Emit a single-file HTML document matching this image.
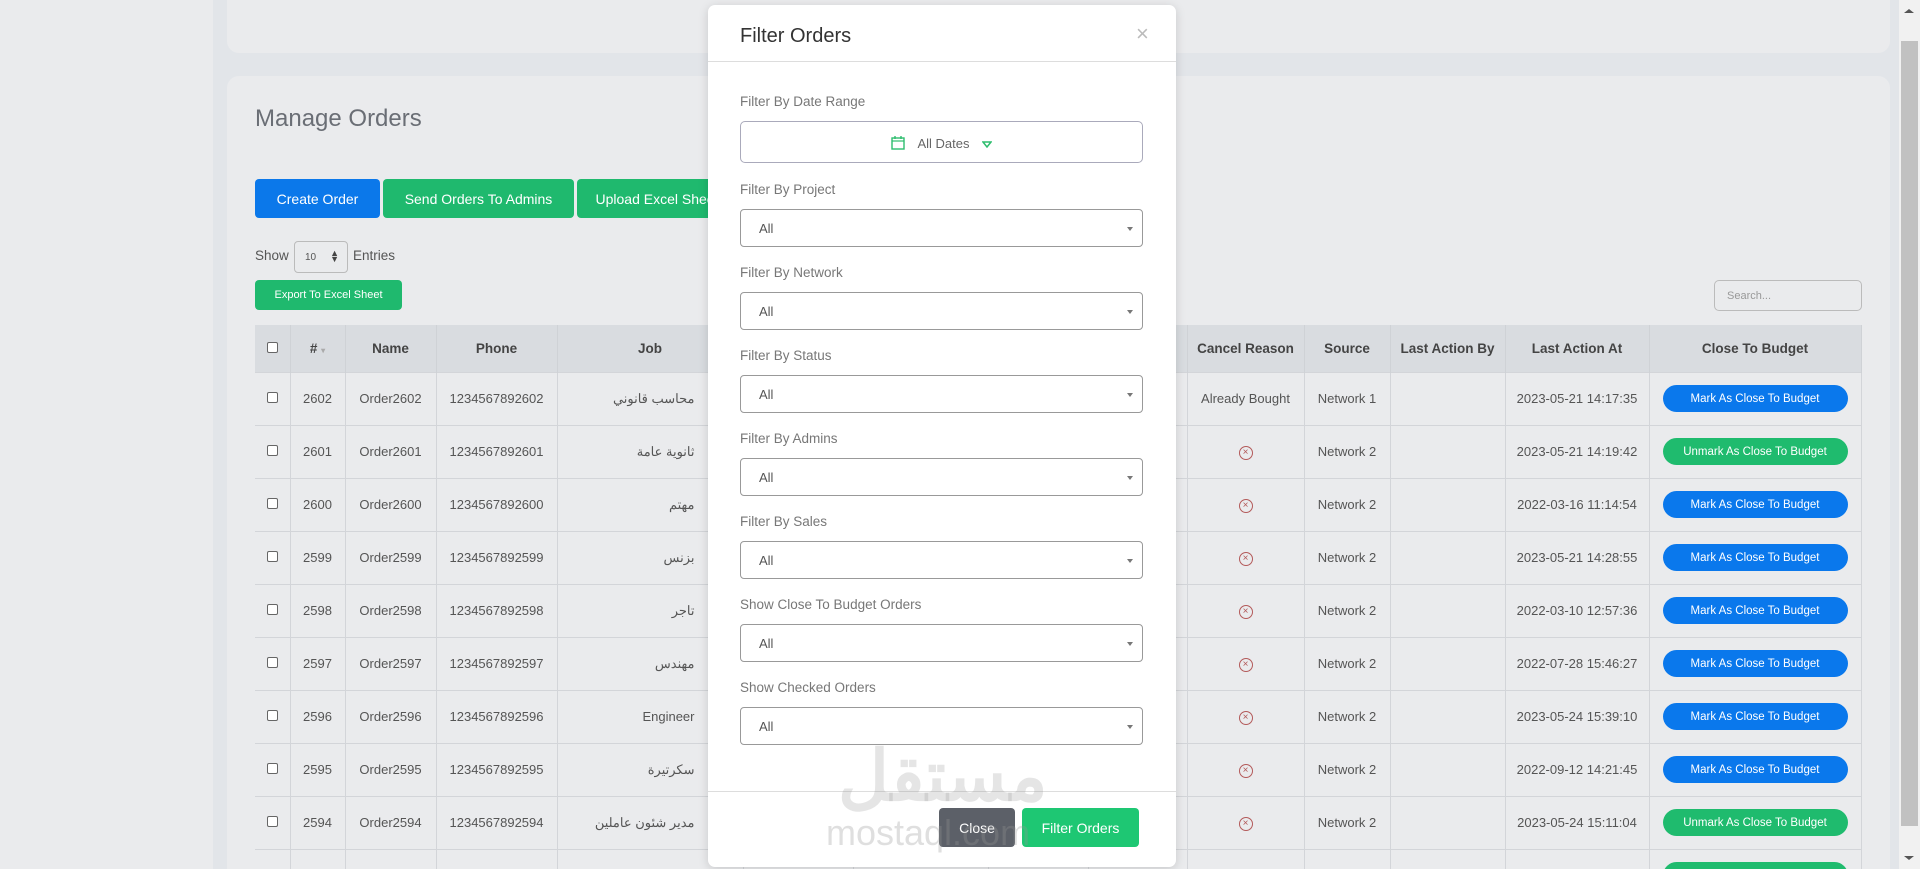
<!DOCTYPE html>
<html style="width:1920px;height:869px;overflow:hidden"><head><meta charset="utf-8">
<style>
*{box-sizing:border-box;margin:0;padding:0}
body{width:1920px;height:869px;overflow:hidden;background:#e2e5e9;font-family:"Liberation Sans","Noto Sans CJK SC",sans-serif;position:relative;color:#555}
.side{position:absolute;left:0;top:0;width:213px;height:869px;background:#eaebed}
.card{position:absolute;background:#eaebed;border-radius:12px}
.btn{position:absolute;color:#fff;font-size:14px;display:flex;align-items:center;justify-content:center;border-radius:4px}
.wrap{position:absolute;left:0;top:0;width:1920px;height:869px;overflow:hidden}
table{position:absolute;left:255px;top:325px;border-collapse:collapse;table-layout:fixed;width:1606px}
th{height:47px;background:#d9dce0;font-size:13.5px;color:#444;font-weight:bold;border-right:1px solid #cfd2d6}
td{height:53px;font-size:13px;color:#555;text-align:center;border-top:1px solid #d3d5d9;border-right:1px solid #d3d5d9;white-space:nowrap;overflow:hidden}
.cb{display:inline-block;width:11px;height:11px;border:1px solid #666;border-radius:2px;background:#fff}
.pill{display:inline-block;width:185px;height:27px;line-height:28px;border-radius:14px;color:#fff;font-size:11.5px}
.blue{background:#0a78ec}.green{background:#1fbb6e}
.xi{display:inline-block;width:14px;height:14px;border:1px solid #b35a5a;border-radius:50%;color:#b35a5a;font-size:10px;line-height:12px}
.ar{text-align:right!important;padding-right:48px}
.modal{position:absolute;left:708px;top:5px;width:468px;height:862px;background:#fff;border-radius:7px;box-shadow:0 2px 10px rgba(0,0,0,.15)}
.lbl{position:absolute;left:32px;font-size:13.5px;color:#777}
.sel{position:absolute;left:32px;width:403px;height:38px;border:1px solid #999;border-radius:4px;font-size:13px;color:#555;padding:11px 0 0 18px}
.sel:after{content:"";position:absolute;right:9px;top:17px;border:3px solid transparent;border-top:4px solid #777}
</style></head><body>
<div class="wrap">
<div class="side"></div>
<div class="card" style="left:227px;top:-12px;width:1663px;height:65px"></div>
<div class="card" style="left:227px;top:76px;width:1663px;height:820px"></div>
<div style="position:absolute;left:255px;top:105px;font-size:24px;color:#6a6e75">Manage Orders</div>
<div class="btn" style="left:255px;top:179px;width:125px;height:39px;background:#0b78ea">Create Order</div>
<div class="btn" style="left:383px;top:179px;width:191px;height:39px;background:#1fb96e">Send Orders To Admins</div>
<div class="btn" style="left:577px;top:179px;width:160px;height:39px;background:#1fb96e">Upload Excel Sheet</div>
<div style="position:absolute;left:255px;top:248px;font-size:13.5px;color:#555">Show</div>
<div style="position:absolute;left:294px;top:241px;width:54px;height:32px;border:1px solid #bbb;border-radius:4px;font-size:10px;padding:10px 0 0 10px;color:#555">10 <span style="position:absolute;right:8px;top:8px;font-size:9px;line-height:6px;color:#444">▲<br>▼</span></div>
<div style="position:absolute;left:353px;top:248px;font-size:13.5px;color:#555">Entries</div>
<div class="btn" style="left:255px;top:280px;width:147px;height:30px;background:#1fb96e;font-size:11px">Export To Excel Sheet</div>
<div style="position:absolute;left:1714px;top:280px;width:148px;height:31px;border:1px solid #bbb;border-radius:5px;font-size:11px;color:#999;padding:9px 0 0 12px">Search...</div>
<table>
<colgroup><col style="width:35px"><col style="width:55px"><col style="width:91px"><col style="width:121px"><col style="width:186px"><col style="width:110px"><col style="width:135px"><col style="width:100px"><col style="width:99px"><col style="width:117px"><col style="width:86px"><col style="width:115px"><col style="width:144px"><col style="width:212px"></colgroup>
<tr><th><span class="cb"></span></th><th># <span style="color:#aaa;font-size:8px">▾</span></th><th>Name</th><th>Phone</th><th>Job</th><th>Project</th><th>Created At</th><th>Status</th><th>Checked</th><th>Cancel Reason</th><th>Source</th><th>Last Action By</th><th>Last Action At</th><th>Close To Budget</th></tr>
<tr><td><span class="cb"></span></td><td>2602</td><td>Order2602</td><td>1234567892602</td><td class="ar">محاسب قانوني</td><td>Project 1</td><td>2023-05-21</td><td>New</td><td></td><td>Already Bought</td><td>Network 1</td><td></td><td>2023-05-21 14:17:35</td><td><span class="pill blue">Mark As Close To Budget</span></td></tr>
<tr><td><span class="cb"></span></td><td>2601</td><td>Order2601</td><td>1234567892601</td><td class="ar">ثانوية عامة</td><td></td><td></td><td></td><td></td><td><span class="xi">×</span></td><td>Network 2</td><td></td><td>2023-05-21 14:19:42</td><td><span class="pill green">Unmark As Close To Budget</span></td></tr>
<tr><td><span class="cb"></span></td><td>2600</td><td>Order2600</td><td>1234567892600</td><td class="ar">مهتم</td><td></td><td></td><td></td><td></td><td><span class="xi">×</span></td><td>Network 2</td><td></td><td>2022-03-16 11:14:54</td><td><span class="pill blue">Mark As Close To Budget</span></td></tr>
<tr><td><span class="cb"></span></td><td>2599</td><td>Order2599</td><td>1234567892599</td><td class="ar">بزنس</td><td></td><td></td><td></td><td></td><td><span class="xi">×</span></td><td>Network 2</td><td></td><td>2023-05-21 14:28:55</td><td><span class="pill blue">Mark As Close To Budget</span></td></tr>
<tr><td><span class="cb"></span></td><td>2598</td><td>Order2598</td><td>1234567892598</td><td class="ar">تاجر</td><td></td><td></td><td></td><td></td><td><span class="xi">×</span></td><td>Network 2</td><td></td><td>2022-03-10 12:57:36</td><td><span class="pill blue">Mark As Close To Budget</span></td></tr>
<tr><td><span class="cb"></span></td><td>2597</td><td>Order2597</td><td>1234567892597</td><td class="ar">مهندس</td><td></td><td></td><td></td><td></td><td><span class="xi">×</span></td><td>Network 2</td><td></td><td>2022-07-28 15:46:27</td><td><span class="pill blue">Mark As Close To Budget</span></td></tr>
<tr><td><span class="cb"></span></td><td>2596</td><td>Order2596</td><td>1234567892596</td><td class="ar">Engineer</td><td></td><td></td><td></td><td></td><td><span class="xi">×</span></td><td>Network 2</td><td></td><td>2023-05-24 15:39:10</td><td><span class="pill blue">Mark As Close To Budget</span></td></tr>
<tr><td><span class="cb"></span></td><td>2595</td><td>Order2595</td><td>1234567892595</td><td class="ar">سكرتيرة</td><td></td><td></td><td></td><td></td><td><span class="xi">×</span></td><td>Network 2</td><td></td><td>2022-09-12 14:21:45</td><td><span class="pill blue">Mark As Close To Budget</span></td></tr>
<tr><td><span class="cb"></span></td><td>2594</td><td>Order2594</td><td>1234567892594</td><td class="ar">مدير شئون عاملين</td><td></td><td></td><td></td><td></td><td><span class="xi">×</span></td><td>Network 2</td><td></td><td>2023-05-24 15:11:04</td><td><span class="pill green">Unmark As Close To Budget</span></td></tr>
<tr><td><span class="cb"></span></td><td>2593</td><td>Order2593</td><td>1234567892593</td><td class="ar">مدير الخدمات</td><td>Project 1</td><td>2022-03-09</td><td></td><td></td><td><span class="xi">×</span></td><td>Network 2</td><td></td><td>2023-05-22 14:15:50</td><td><span class="pill green">Unmark</span></td></tr>
</table>
<div class="modal">
<div style="position:absolute;left:32px;top:20px;font-size:20px;color:#333">Filter Orders</div>
<div style="position:absolute;left:428px;top:16px;font-size:22px;color:#bbb">×</div>
<div style="position:absolute;left:0;top:56px;width:468px;border-top:1px solid #ddd"></div>
<div class="lbl" style="top:89px">Filter By Date Range</div>
<div style="position:absolute;left:32px;top:116px;width:403px;height:42px;border:1px solid #aab;border-radius:5px;text-align:center;font-size:13px;color:#666;padding-top:13px">
<svg width="14" height="15" viewBox="0 0 14 15" style="vertical-align:-2px;margin-right:12px"><rect x="1" y="3" width="12" height="11" fill="none" stroke="#2ebd6e" stroke-width="1.4"/><line x1="1" y1="6" x2="13" y2="6" stroke="#2ebd6e" stroke-width="1.2"/><line x1="4" y1="1" x2="4" y2="4" stroke="#2ebd6e" stroke-width="1.4"/><line x1="10" y1="1" x2="10" y2="4" stroke="#2ebd6e" stroke-width="1.4"/></svg>All Dates<svg width="10" height="7" viewBox="0 0 10 7" style="margin-left:12px"><path d="M1 1 L9 1 L5 6 Z" fill="none" stroke="#2ebd6e" stroke-width="1.5"/></svg></div>
<div class="lbl" style="top:177px">Filter By Project</div>
<div class="sel" style="top:204px">All</div>
<div class="lbl" style="top:260px">Filter By Network</div>
<div class="sel" style="top:287px">All</div>
<div class="lbl" style="top:343px">Filter By Status</div>
<div class="sel" style="top:370px">All</div>
<div class="lbl" style="top:426px">Filter By Admins</div>
<div class="sel" style="top:453px">All</div>
<div class="lbl" style="top:509px">Filter By Sales</div>
<div class="sel" style="top:536px">All</div>
<div class="lbl" style="top:592px">Show Close To Budget Orders</div>
<div class="sel" style="top:619px">All</div>
<div class="lbl" style="top:675px">Show Checked Orders</div>
<div class="sel" style="top:702px">All</div>
<div style="position:absolute;left:0;top:786px;width:468px;border-top:1px solid #ddd"></div>
<div class="btn" style="left:231px;top:803px;width:76px;height:39px;background:#5c6068">Close</div>
<div class="btn" style="left:314px;top:803px;width:117px;height:39px;background:#1ec773">Filter Orders</div>
<div style="position:absolute;left:130px;top:730px;font-size:70px;font-weight:bold;color:rgba(150,150,150,.25);direction:rtl">مستقل</div>
<div style="position:absolute;left:118px;top:807px;font-size:36px;color:rgba(150,150,150,.3)">mostaql.com</div>
</div>
<div style="position:absolute;left:1899px;top:0;width:21px;height:869px;background:#f1f1f1"></div>
<div style="position:absolute;left:1901px;top:41px;width:17px;height:785px;background:#c1c1c1"></div>
<div style="position:absolute;left:1904px;top:4px;border:5px solid transparent;border-bottom:4px solid #555"></div>
<div style="position:absolute;left:1904px;top:856px;border:5px solid transparent;border-top:4px solid #555"></div>
</div>
</body></html>
